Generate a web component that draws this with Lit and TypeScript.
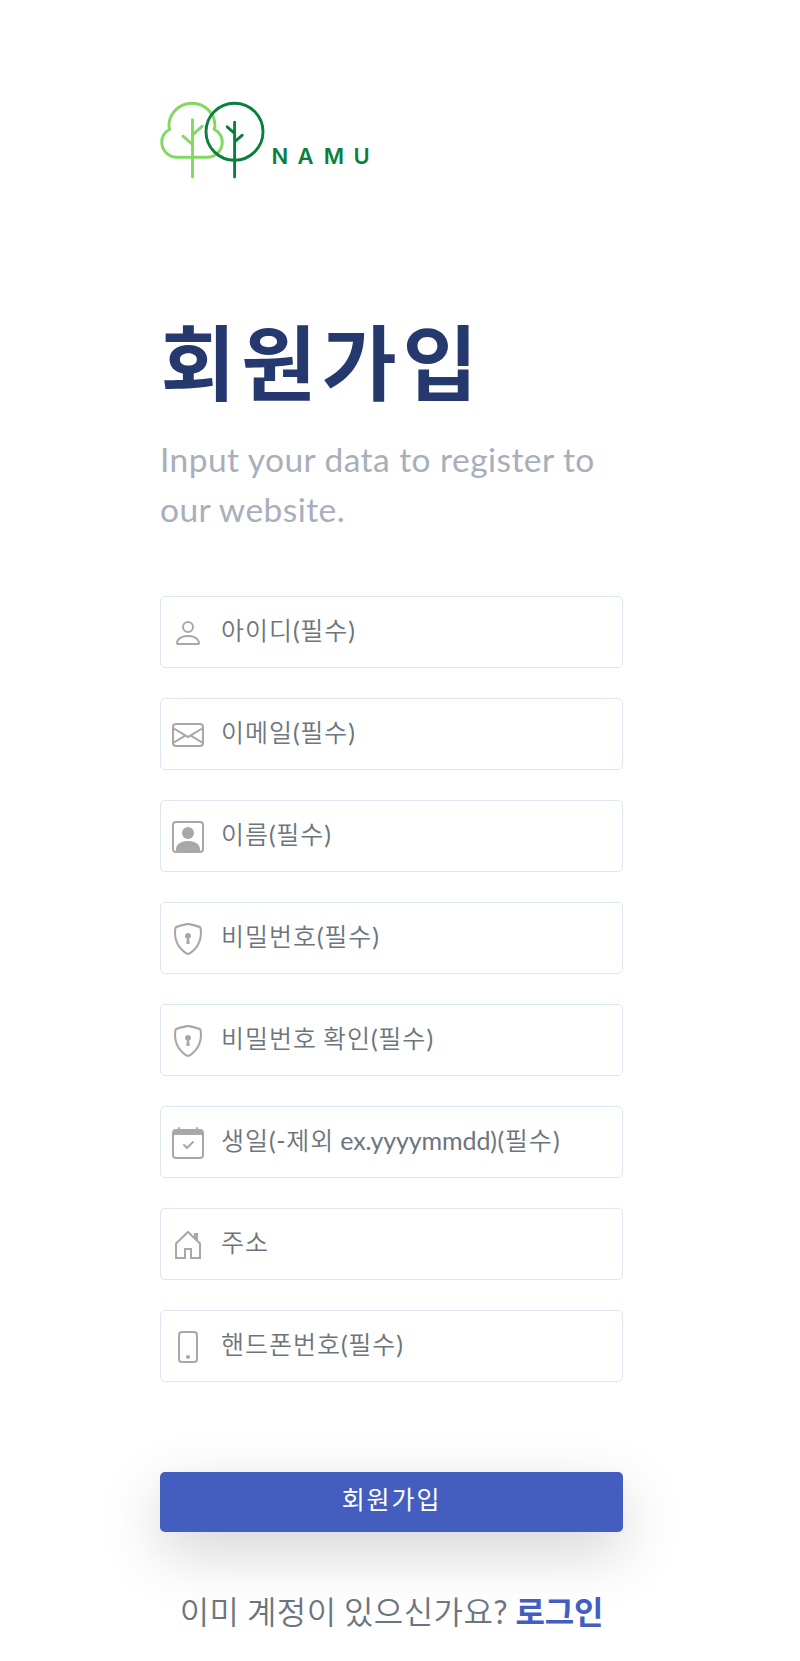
import { LitElement, html, css, svg } from "lit";
import { customElement, property } from "lit/decorators.js";

const ICONS: Record<string, unknown> = {
  person: svg`<path d="M8 8a3 3 0 1 0 0-6 3 3 0 0 0 0 6zm2-3a2 2 0 1 1-4 0 2 2 0 0 1 4 0zm4 8c0 1-1 1-1 1H3s-1 0-1-1 1-4 6-4 6 3 6 4zm-1-.004c-.001-.246-.154-.986-.832-1.664C11.516 10.68 10.289 10 8 10c-2.29 0-3.516.68-4.168 1.332-.678.678-.83 1.418-.832 1.664h10z"/>`,
  envelope: svg`<path d="M0 4a2 2 0 0 1 2-2h12a2 2 0 0 1 2 2v8a2 2 0 0 1-2 2H2a2 2 0 0 1-2-2V4zm2-1a1 1 0 0 0-1 1v.217l7 4.2 7-4.2V4a1 1 0 0 0-1-1H2zm13 2.383-4.758 2.855L15 11.114v-5.73zm-.034 6.878L9.271 8.82 8 9.583 6.728 8.82l-5.694 3.44A1 1 0 0 0 2 13h12a1 1 0 0 0 .966-.739zM1 11.114l4.758-2.876L1 5.383v5.73z"/>`,
  square: svg`<path d="M11 6a3 3 0 1 1-6 0 3 3 0 0 1 6 0z"/><path d="M2 0a2 2 0 0 0-2 2v12a2 2 0 0 0 2 2h12a2 2 0 0 0 2-2V2a2 2 0 0 0-2-2H2zm12 1a1 1 0 0 1 1 1v12a1 1 0 0 1-1 1v-1c0-1-1-4-6-4s-6 3-6 4v1a1 1 0 0 1-1-1V2a1 1 0 0 1 1-1h12z"/>`,
  shield: svg`<path d="M5.338 1.59a61.44 61.44 0 0 0-2.837.856.481.481 0 0 0-.328.39c-.554 4.157.726 7.19 2.253 9.188a10.725 10.725 0 0 0 2.287 2.233c.346.244.652.42.893.533.12.057.218.095.293.118a.55.55 0 0 0 .101.025.615.615 0 0 0 .1-.025c.076-.023.174-.061.294-.118.24-.113.547-.29.893-.533a10.726 10.726 0 0 0 2.287-2.233c1.527-1.997 2.807-5.031 2.253-9.188a.48.48 0 0 0-.328-.39c-.651-.213-1.75-.56-2.837-.855C9.552 1.29 8.531 1.067 8 1.067c-.53 0-1.552.223-2.662.524zM5.072.56C6.157.265 7.31 0 8 0s1.843.265 2.928.56c1.11.3 2.229.655 2.887.87a1.54 1.54 0 0 1 1.044 1.262c.596 4.477-.787 7.795-2.465 9.99a11.775 11.775 0 0 1-2.517 2.453 7.159 7.159 0 0 1-1.048.625c-.28.132-.581.24-.829.24s-.548-.108-.829-.24a7.158 7.158 0 0 1-1.048-.625 11.777 11.777 0 0 1-2.517-2.453C1.928 10.487.545 7.169 1.141 2.692A1.54 1.54 0 0 1 2.185 1.43 62.456 62.456 0 0 1 5.072.56z"/><path d="M9.5 6.5a1.5 1.5 0 0 1-1 1.415l.385 1.99a.5.5 0 0 1-.491.595h-.788a.5.5 0 0 1-.49-.595l.384-1.99a1.5 1.5 0 1 1 2-1.415z"/>`,
  calendar: svg`<path d="M10.854 7.146a.5.5 0 0 1 0 .708l-3 3a.5.5 0 0 1-.708 0l-1.5-1.500a.5.5 0 0 1 .708-.708L7.500 9.793l2.646-2.647a.5.5 0 0 1 .708 0z"/><path d="M4 .5a.5.5 0 0 0-1 0V1H2a2 2 0 0 0-2 2v11a2 2 0 0 0 2 2h12a2 2 0 0 0 2-2V3a2 2 0 0 0-2-2h-1V.5a.5.5 0 0 0-1 0V1H4V.5zM1 4h14v10a1 1 0 0 1-1 1H2a1 1 0 0 1-1-1V4z"/>`,
  house: svg`<path d="M2 7.200v7.300h4.500V10h3v4.500H14V7.200L8 1.500z" fill="none" stroke="currentColor"/><path d="M11 2h2v4l-2-2z"/>`,
  phone: svg`<path d="M11 1a1 1 0 0 1 1 1v12a1 1 0 0 1-1 1H5a1 1 0 0 1-1-1V2a1 1 0 0 1 1-1h6zM5 0a2 2 0 0 0-2 2v12a2 2 0 0 0 2 2h6a2 2 0 0 0 2-2V2a2 2 0 0 0-2-2H5z"/><path d="M8 14a1 1 0 1 0 0-2 1 1 0 0 0 0 2z"/>`,
};

@customElement("form-field")
class FormField extends LitElement {
  @property() icon = "";
  @property() label = "";

  static styles = css`
    :host { display: block; }
    .field {
      display: flex; align-items: center; box-sizing: border-box; height: 72px; cursor: text;
      padding: 0 11px; border: 1px solid #dce7f1; border-radius: 5px; background: #fff;
    }
    .icon { flex: none; width: 32px; height: 32px; margin-top: 2px; color: #a6a8aa; fill: currentColor; }
    .label {
      flex: 1; min-width: 0; padding-bottom: 6px; margin-left: 17px; color: #6c757d; white-space: nowrap;
      font: 350 25px/36px "Noto Sans CJK KR", sans-serif; letter-spacing: 1px; word-spacing: -0.5px;
    }
    .latin { font-family: Lato, sans-serif; font-weight: 400; letter-spacing: -0.1px; }
    .paren { font-family: Lato, sans-serif; font-weight: 400; letter-spacing: 0.6px; }
  `;

  render() {
    const parts = this.label.split(/([a-z.]+|[()-])/).filter(Boolean);
    return html`<div class="field">
      <svg class="icon" viewBox="0 0 16 16">${ICONS[this.icon]}</svg>
      <span class="label">${parts.map((p) =>
        /^[a-z.]+$/.test(p) ? html`<span class="latin">${p}</span>`
        : /^[()-]$/.test(p) ? html`<span class="paren">${p}</span>` : p)}</span>
    </div>`;
  }
}

const FIELDS = [
  ["person", "아이디(필수)"],
  ["envelope", "이메일(필수)"],
  ["square", "이름(필수)"],
  ["shield", "비밀번호(필수)"],
  ["shield", "비밀번호 확인(필수)"],
  ["calendar", "생일(-제외 ex.yyyymmdd)(필수)"],
  ["house", "주소"],
  ["phone", "핸드폰번호(필수)"],
];

@customElement("app-root")
class AppRoot extends LitElement {
  static styles = css`
    :host { display: block; background: #fff; font-family: Lato, "Noto Sans CJK KR", sans-serif; }
    .page { box-sizing: border-box; width: 783px; height: 1661px; padding: 100px 160px 0; overflow: hidden; }
    .logo { display: block; width: 220px; height: 80px; overflow: visible; fill: none; stroke-width: 2.9; stroke-linecap: round; stroke-linejoin: round; }
    .light { stroke: #82d95f; }
    .dark { stroke: #0b7f3c; }
    .brand { fill: #0b7f3c; font: 600 22px Inter, sans-serif; }
    .title { margin: 133px 0 0 0.5px; height: 100px; line-height: 100px; font-size: 81.5px; font-weight: 700; letter-spacing: 5.7px; color: #25396f; white-space: nowrap; }
    .subtitle { margin: 21px -10px 0 0; font-size: 33.5px; line-height: 50px; letter-spacing: 0.45px; color: #a8aebb; }
    .form { display: grid; gap: 30px; margin-top: 62px; }
    .submit {
      display: block; width: 100%; height: 60px; margin-top: 90px; padding: 0 0 5px; border: 0; border-radius: 5px;
      background: #435ebe; color: #fff; font: 25px/1.5 Lato, "Noto Sans CJK KR", sans-serif; letter-spacing: 1.9px;
      box-shadow: 0 20px 60px rgba(0, 0, 0, 0.175);
    }
    .footer { margin: 53px 0 0; line-height: 50px; font-size: 32px; color: #6c757d; text-align: center; white-space: nowrap; font-family: "Noto Sans CJK KR", sans-serif; font-weight: 350; letter-spacing: 0.4px; }
    .mark { font-family: Lato, sans-serif; font-weight: 400; }
    .link { color: #435ebe; font-weight: 700; text-decoration: none; letter-spacing: -0.2px; }
  `;

  render() {
    return html`<main class="page">
      <svg class="logo" viewBox="20 20 220 80" role="img" aria-label="NAMU">
        <g class="light">
          <path d="M29.700 49.300L28.900 46A23.050 22.800 0 0 1 75 46L74.100 49.300C79 52 82.300 56.500 82.300 62A15.600 15.400 0 0 1 66 77.300H38A15.600 15.400 0 0 1 21.700 62C21.700 56.500 25 52 29.700 49.300z" />
          <path d="M52.500 39.800V97M62.300 46.200L52.500 54.800M43 56.200L52.500 64.500" />
        </g>
        <g class="dark">
          <circle cx="94.500" cy="51.700" r="28.500" />
          <path d="M94.600 42.200V97M87.200 46.800L94.600 53.300M102.300 55.200L94.600 61.800" />
        </g>
        <text class="brand" x="131.500 157.500 183.800 213.500" y="83.800">NAMU</text>
      </svg>
      <h1 class="title">회원가입</h1>
      <p class="subtitle">Input your data to register to our website.</p>
      <form class="form">
        ${FIELDS.map(([icon, label]) => html`<form-field icon=${icon} label=${label}></form-field>`)}
      </form>
      <button class="submit" type="button">회원가입</button>
      <p class="footer">이미 계정이 있으신가요<span class="mark">?</span> <a class="link" href="#">로그인</a></p>
    </main>`;
  }
}
